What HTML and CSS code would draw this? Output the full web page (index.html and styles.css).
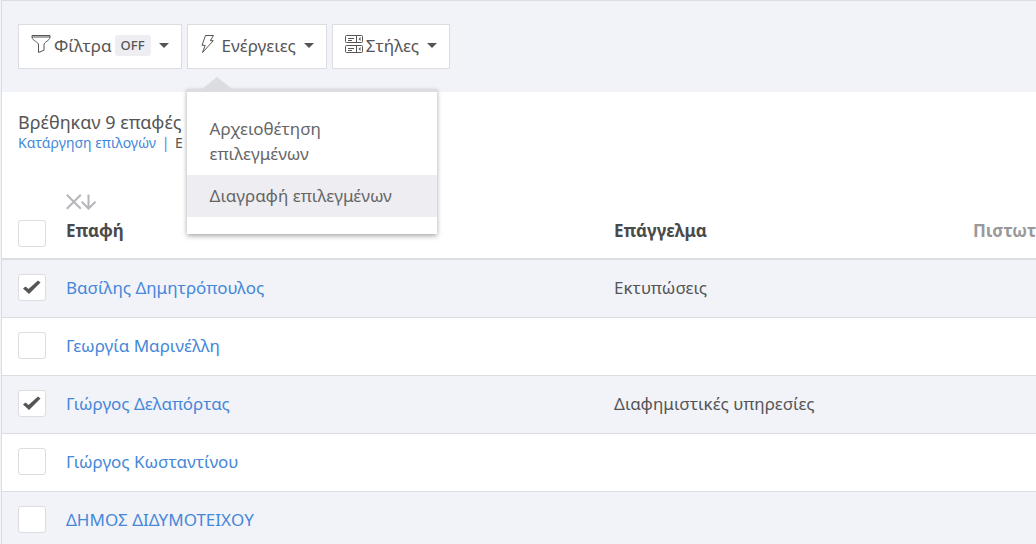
FILE: index.html
```
<!DOCTYPE html>
<html lang="el">
<head>
<meta charset="utf-8">
<meta name="viewport" content="width=device-width, initial-scale=1">
<title>Επαφές</title>
<link rel="stylesheet" href="styles.css">
</head>
<body>
<main class="panel">
  <div class="toolbar">
    <button class="tool tool-filters" type="button">
      <svg class="tool-icon" width="20" height="20" viewBox="0 0 20 20" aria-hidden="true"><path d="M1 1.500h18v1.700c-.5 4-6 4.300-6 7.800v5.200l-5.500 2.300V11C7.500 7.500 1.500 7.200 1 3.200zM1 3h18"/></svg>
      <span>Φίλτρα</span><span class="badge">OFF</span><span class="caret"></span>
    </button>
    <div class="dropdown">
      <button class="tool" type="button" aria-expanded="true">
        <svg class="tool-icon" width="16" height="20" viewBox="0 0 16 20" aria-hidden="true"><path d="M5.500 1.500h8l-3.200 5.200h3L2.500 18.500l2.700-7.200H2z"/></svg>
        <span>Ενέργειες</span><span class="caret"></span>
      </button>
      <div class="menu">
        <a class="menu-item" href="#">Αρχειοθέτηση επιλεγμένων</a>
        <a class="menu-item active" href="#">Διαγραφή επιλεγμένων</a>
      </div>
    </div>
    <button class="tool tool-columns" type="button">
      <svg class="tool-icon" width="18" height="20" viewBox="0 0 18 20" aria-hidden="true"><rect x=".5" y="1.500" width="17" height="7" rx="1"/><rect x=".5" y="11.500" width="17" height="7" rx="1"/><path d="M11.500 1.500v7M11.500 11.500v7M3 4.500h6M3 6.500h4M3 14.500h6M3 16.500h4"/><path class="solid" d="M15.500 3v4l-2-2zM15.500 13v4l-2-2z"/></svg>
      <span>Στήλες</span><span class="caret"></span>
    </button>
  </div>

  <div class="summary">
    <h1 class="summary-title">Βρέθηκαν 9 επαφές</h1>
    <p class="summary-links"><a href="#">Κατάργηση επιλογών</a> <span class="bar">|</span> Ε</p>
  </div>

  <table class="contacts">
    <colgroup><col class="col-check"><col class="col-name"><col><col class="col-credit"></colgroup>
    <thead>
      <tr>
        <th><input class="check" type="checkbox" aria-label="Επιλογή όλων"></th>
        <th>
          <svg class="sort" width="32" height="16" viewBox="0 0 32 16" aria-hidden="true"><path d="M.8.8l14 14M14.800.8l-14 14M22.500.5v14M15.800 7.800l6.700 6.700 7-6.700"/></svg>
          Επαφή
        </th>
        <th>Επάγγελμα</th>
        <th class="muted">Πιστωτ</th>
      </tr>
    </thead>
    <tbody>
      <tr><td><input class="check" type="checkbox" checked aria-label="Βασίλης Δημητρόπουλος"></td><td><a href="#">Βασίλης Δημητρόπουλος</a></td><td>Εκτυπώσεις</td><td></td></tr>
      <tr><td><input class="check" type="checkbox" aria-label="Γεωργία Μαρινέλλη"></td><td><a href="#">Γεωργία Μαρινέλλη</a></td><td></td><td></td></tr>
      <tr><td><input class="check" type="checkbox" checked aria-label="Γιώργος Δελαπόρτας"></td><td><a href="#">Γιώργος Δελαπόρτας</a></td><td>Διαφημιστικές υπηρεσίες</td><td></td></tr>
      <tr><td><input class="check" type="checkbox" aria-label="Γιώργος Κωσταντίνου"></td><td><a href="#">Γιώργος Κωσταντίνου</a></td><td></td><td></td></tr>
      <tr><td><input class="check" type="checkbox" aria-label="ΔΗΜΟΣ ΔΙΔΥΜΟΤΕΙΧΟΥ"></td><td><a href="#">ΔΗΜΟΣ ΔΙΔΥΜΟΤΕΙΧΟΥ</a></td><td></td><td></td></tr>
    </tbody>
  </table>
</main>
</body>
</html>
```
FILE: styles.css
```
* { box-sizing: border-box; }
body {
  margin: 0;
  padding-left: 1px;
  overflow: hidden;
  background: #f2f3f8;
  color: #555;
  font: 17px/24px "Noto Sans", sans-serif;
}
a { color: #4587d9; text-decoration: none; }
.panel {
  border-top: 1px solid #dcdde0;
  border-left: 1px solid #dcdde0;
  background: #fff;
}
.toolbar {
  display: flex;
  gap: 5px;
  padding: 23px 16px;
  background: #f2f3f8;
}
.tool {
  display: flex;
  align-items: center;
  height: 45px;
  padding: 0 12px 2px;
  border: 1px solid #dcdde0;
  background: #fff;
  color: #555;
  font: inherit;
  white-space: nowrap;
}
.tool-icon {
  flex: none;
  margin: 0 6px 3px 0;
  fill: none;
  stroke: #555;
}
.solid { fill: #555; stroke: none; }
.tool-filters .tool-icon,
.tool-columns .tool-icon { margin-right: 3px; }
.badge {
  margin-left: 3px;
  padding: 0 6px;
  border-radius: 3px;
  background: #eeedf2;
  font-size: 13px;
  line-height: 21px;
  font-weight: 500;
}
.caret {
  margin-left: 8px;
  border: 5px solid transparent;
  border-top-color: #555;
  border-bottom: 0;
}
.dropdown { position: relative; }
.menu {
  position: absolute;
  z-index: 2;
  top: 65px;
  left: 0;
  width: 250px;
  padding: 16px 0 17px;
  border-top: 3px solid #dcdde0;
  background: #fff;
  box-shadow: 0 2px 5px rgba(0, 0, 0, .35);
}
.menu::before {
  content: "";
  position: absolute;
  top: -15px;
  left: 15px;
  border: 15px solid transparent;
  border-top: 0;
  border-bottom: 12px solid #dcdde0;
}
.menu-item {
  display: block;
  padding: 8px 23px 9px;
  color: #666;
  line-height: 25px;
}
.active { background: #eeedf2; }
.summary { padding: 18px 16px 0; }
.summary-title {
  margin: 0;
  font-size: 18px;
  line-height: 24px;
  font-weight: 400;
}
.summary-links {
  margin: 0;
  font-size: 14px;
  line-height: 18px;
}
.bar { margin: 0 2px; color: #4587d9; }
.contacts {
  width: 100%;
  table-layout: fixed;
  border-collapse: separate;
  border-spacing: 0;
}
.col-check { width: 48px; }
.col-name { width: 53%; }
.col-credit { width: 79px; }
.contacts th {
  height: 108px;
  padding: 0 0 15px 16px;
  border-bottom: 2px solid #dcdde0;
  color: #4a4a4a;
  text-align: left;
  vertical-align: bottom;
  white-space: nowrap;
}
.contacts th:first-child { padding-bottom: 11px; }
.contacts th.muted { color: #999; }
.contacts td {
  height: 58px;
  padding: 0 0 1px 16px;
  border-bottom: 1px solid #dcdde0;
}
.contacts td:first-child { padding-bottom: 3px; }
.contacts tbody tr:nth-child(odd) { background: #f2f3f8; }
.sort {
  display: block;
  margin-bottom: 9px;
  fill: none;
  stroke: #b5b5ba;
  stroke-width: 2;
}
.check {
  appearance: none;
  display: block;
  width: 28px;
  height: 27px;
  margin: 0;
  border: 1px solid #dcdde0;
  border-radius: 3px;
  background: #fff;
}
.check:checked {
  background: #fff url("data:image/svg+xml,%3Csvg xmlns='http://www.w3.org/2000/svg' viewBox='0 0 18 16'%3E%3Cpath d='M0 9.500L2.500 7.500l3 2.500L15 1.500l2.500 2L6 15z' fill='%23555'/%3E%3C/svg%3E") center / 18px 16px no-repeat;
}
```
